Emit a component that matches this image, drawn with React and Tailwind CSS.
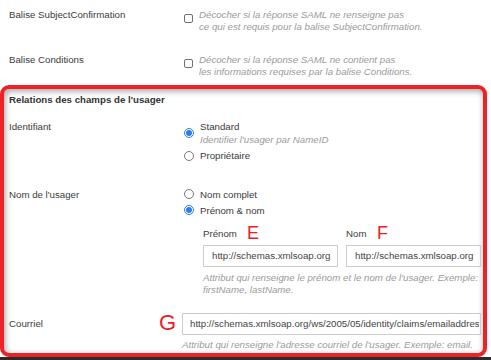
import React from 'react';

const Checkbox = () => (
    <span className="mt-[5px] w-[9px] h-[9px] shrink-0 rounded-[2px] border border-[#6f6f6f] bg-white" />
);

const Radio = ({ checked }) =>
    checked ? (
        <span className="w-[10px] h-[10px] shrink-0 rounded-full border border-[#2b7de9] flex items-center justify-center">
            <span className="w-[6px] h-[6px] rounded-full bg-[#2b7de9]" />
        </span>
    ) : (
        <span className="w-[10px] h-[10px] shrink-0 rounded-full border border-[#777]" />
    );

const Option = ({ checked, label, hint }) => (
    <div className="flex items-center gap-[6px]">
        <Radio checked={checked} />
        <div className="leading-[13px]">
            <div>{label}</div>
            {hint && <div className="italic text-[#9a9a9a]">{hint}</div>}
        </div>
    </div>
);

export default function App() {
    return (
        <div className="w-[491px] h-[360px] bg-white overflow-hidden flex flex-col font-['Liberation_Sans',Arial,sans-serif] text-[9.7px] text-[#3a3a3a]">
            {/* Options SAML */}
            <div className="pl-[9px] pt-[8.7px]">
                <div className="flex">
                    <div className="w-[175px] leading-[12px]">Balise SubjectConfirmation</div>
                    <Checkbox />
                    <div className="ml-[6px] leading-[12px] italic text-[#9a9a9a]">
                        Décocher si la réponse SAML ne renseigne pas
                        <br />
                        ce qui est requis pour la balise SubjectConfirmation.
                    </div>
                </div>
                <div className="flex mt-[21px]">
                    <div className="w-[175px] leading-[12px]">Balise Conditions</div>
                    <Checkbox />
                    <div className="ml-[6px] leading-[12px] italic text-[#9a9a9a]">
                        Décocher si la réponse SAML ne contient pas
                        <br />
                        les informations requises par la balise Conditions.
                    </div>
                </div>
            </div>

            {/* Relations des champs */}
            <div className="mt-[7.3px] w-[487px] h-[272px] shrink-0 border-[4px] border-[#ec2227] rounded-[9px] shadow-[inset_1px_2px_6px_rgba(0,0,0,0.38)] pl-[5px] pr-[2px] pt-[4px]">
                <div className="leading-[13px] font-bold text-[#333]">Relations des champs de l'usager</div>

                <div className="flex mt-[14.5px]">
                    <div className="w-[175px] leading-[13px]">Identifiant</div>
                    <div className="flex flex-col gap-[3px]">
                        <Option checked label="Standard" hint="Identifier l'usager par NameID" />
                        <Option label="Propriétaire" />
                    </div>
                </div>

                <div className="flex mt-[25.5px]">
                    <div className="w-[175px] leading-[13px]">Nom de l'usager</div>
                    <div className="flex-1 flex flex-col">
                        <div className="flex flex-col gap-[3px]">
                            <Option label="Nom complet" />
                            <Option checked label="Prénom & nom" />
                        </div>
                        <div className="ml-[19px] mt-[10px] grid grid-cols-2 gap-x-[8px]">
                            <div className="relative">
                                <div className="leading-[13px]">Prénom</div>
                                <span className="absolute left-[44px] top-[-3px] text-[18px] leading-none text-[#ee1c24]">E</span>
                                <input
                                    readOnly
                                    defaultValue="http://schemas.xmlsoap.org"
                                    className="mt-[5px] w-full h-[22px] border border-[#cdcdcd] pl-[8px] pr-[1px] text-[#444] outline-none"
                                />
                            </div>
                            <div className="relative">
                                <div className="leading-[13px]">Nom</div>
                                <span className="absolute left-[31px] top-[-3px] text-[18px] leading-none text-[#ee1c24]">F</span>
                                <input
                                    readOnly
                                    defaultValue="http://schemas.xmlsoap.org"
                                    className="mt-[5px] w-full h-[22px] border border-[#cdcdcd] pl-[8px] pr-[1px] text-[#444] outline-none"
                                />
                            </div>
                        </div>
                        <div className="ml-[19px] mt-[5px] leading-[12px] italic text-[#9a9a9a]">
                            Attribut qui renseigne le prénom et le nom de l'usager. Exemple:
                            <br />
                            firstName, lastName.
                        </div>
                    </div>
                </div>

                <div className="relative flex items-center mt-[16.8px]">
                    <div className="w-[173px] leading-[13px]">Courriel</div>
                    <span className="absolute left-[150px] top-[-1px] text-[22px] leading-none text-[#ee1c24]">G</span>
                    <input
                        readOnly
                        defaultValue="http://schemas.xmlsoap.org/ws/2005/05/identity/claims/emailaddress"
                        className="flex-1 min-w-0 h-[22.4px] border border-[#cdcdcd] pl-[7px] pr-[1px] text-[#444] outline-none"
                    />
                </div>
                <div className="mt-[3.7px] pl-[173px] leading-[12px] italic text-[#9a9a9a]">
                    Attribut qui renseigne l'adresse courriel de l'usager. Exemple: email.
                </div>
            </div>

            <div className="h-[3px] shrink-0 bg-[#2b2b2b]" />
        </div>
    );
}
